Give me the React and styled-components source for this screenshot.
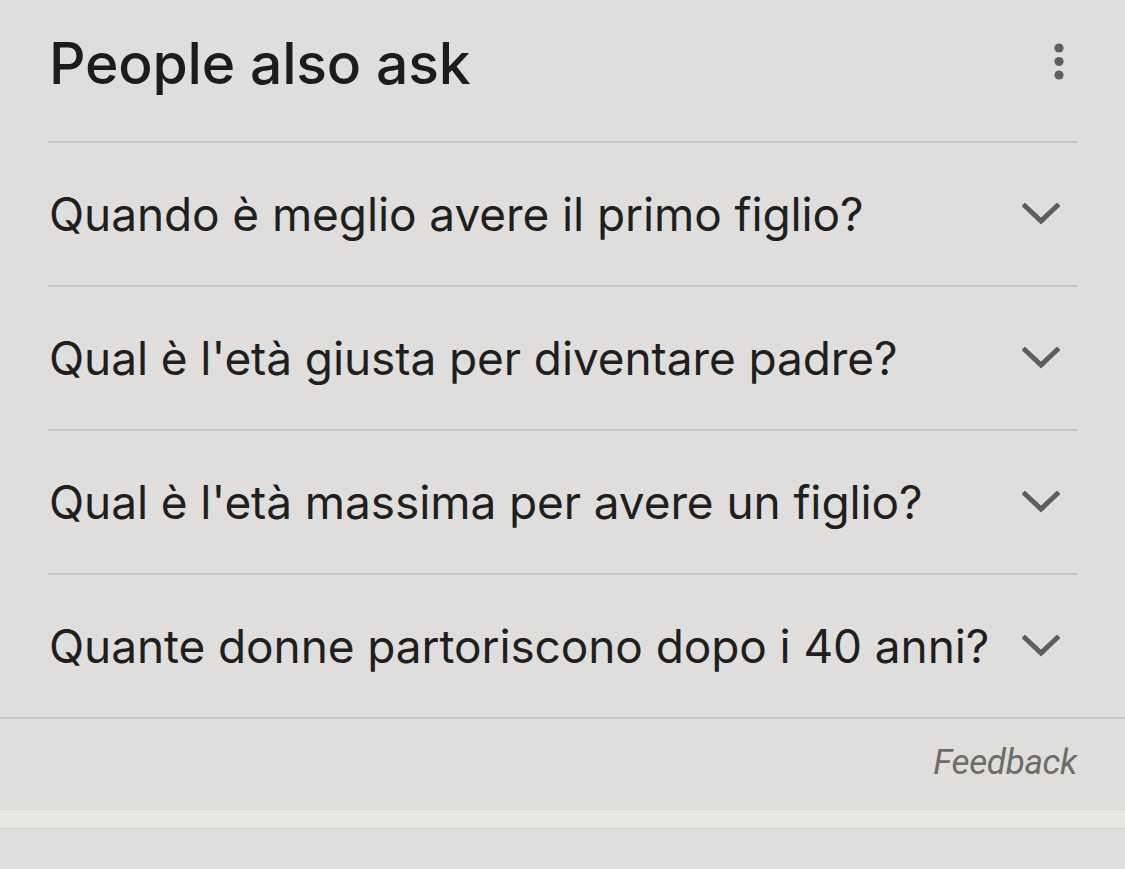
import React from 'react'
import styled, { createGlobalStyle } from 'styled-components'

const GlobalStyle = createGlobalStyle`
  html, body {
    margin: 0;
    padding: 0;
    background: #dfdedc;
  }
  body {
    font-family: Inter, Roboto, "Noto Sans", sans-serif;
    color: #1f1f1f;
  }
`

const questions = [
  'Quando è meglio avere il primo figlio?',
  "Qual è l'età giusta per diventare padre?",
  "Qual è l'età massima per avere un figlio?",
  'Quante donne partoriscono dopo i 40 anni?',
]

const Page = styled.div`
  width: 1125px;
  height: 869px;
  background: #dfdedc;
  overflow: hidden;
`

const Section = styled.div`
  padding: 0 48px 0 48px;
`

const Header = styled.div`
  height: 141px;
  display: flex;
  align-items: center;
  justify-content: space-between;
`

const Title = styled.h1`
  margin: 0 0 14px 0;
  padding-left: 1px;
  font-size: 57px;
  font-weight: 500;
  letter-spacing: -0.2px;
  color: #1c1c1c;
`

const MoreButton = styled.div`
  width: 40px;
  height: 60px;
  display: flex;
  align-items: center;
  justify-content: center;
  margin-top: -18px;
  transform: translateX(2px);
`

const Row = styled.div`
  height: 142px;
  border-top: 2.5px solid #c4c3c1;
  display: flex;
  align-items: center;
  justify-content: space-between;
`

const Question = styled.span`
  font-size: 46px;
  font-weight: 400;
  padding-left: 1px;
  letter-spacing: -0.1px;
  color: #1f1f1f;
`

const Chevron = styled.div`
  width: 40px;
  display: flex;
  justify-content: center;
  margin-right: 16px;
`

const FooterLine = styled.div`
  border-top: 2.5px solid #c4c3c1;
  height: 90px;
  display: flex;
  align-items: center;
  justify-content: flex-end;
  padding-right: 48px;
`

const Feedback = styled.span`
  font-family: Roboto, "Liberation Sans", sans-serif;
  font-style: italic;
  font-size: 35px;
  color: #6c6b68;
  letter-spacing: -0.3px;
  margin-bottom: 4px;
`

const Band = styled.div`
  height: 18px;
  background: #e7e6e5;
  border-top: 1px solid #d8d7d4;
  border-bottom: 1px solid #d3d2ce;
`

const Dots = () => (
  <svg width="14" height="40" viewBox="0 0 14 40">
    <circle cx="7" cy="6" r="4.6" fill="#5f5f5d" />
    <circle cx="7" cy="19.5" r="4.6" fill="#5f5f5d" />
    <circle cx="7" cy="33" r="4.6" fill="#5f5f5d" />
  </svg>
)

const ChevronIcon = () => (
  <svg width="38" height="22" viewBox="0 0 38 22">
    <path d="M3 3 L19 18 L35 3" fill="none" stroke="#5d5d5b" strokeWidth="5" strokeLinecap="square" />
  </svg>
)

const App = () => {
  return (
    <>
      <GlobalStyle />
      <Page>
        <Section>
          <Header>
            <Title>People also ask</Title>
            <MoreButton>
              <Dots />
            </MoreButton>
          </Header>
          {questions.map((q, i) => (
            <Row key={i}>
              <Question>{q}</Question>
              <Chevron>
                <ChevronIcon />
              </Chevron>
            </Row>
          ))}
        </Section>
        <FooterLine>
          <Feedback>Feedback</Feedback>
        </FooterLine>
        <Band />
      </Page>
    </>
  )
}

export default App
